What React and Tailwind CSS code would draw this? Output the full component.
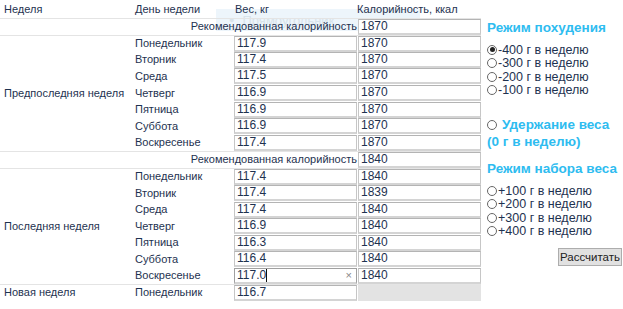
import React from 'react';

const week1 = [
  ['Понедельник', '117.9', '1870'],
  ['Вторник', '117.4', '1870'],
  ['Среда', '117.5', '1870'],
  ['Четверг', '116.9', '1870'],
  ['Пятница', '116.9', '1870'],
  ['Суббота', '116.9', '1870'],
  ['Воскресенье', '117.4', '1870'],
];

const week2 = [
  ['Понедельник', '117.4', '1840'],
  ['Вторник', '117.4', '1839'],
  ['Среда', '117.4', '1840'],
  ['Четверг', '116.9', '1840'],
  ['Пятница', '116.3', '1840'],
  ['Суббота', '116.4', '1840'],
  ['Воскресенье', '117.0', '1840', true],
];

const Box = ({ value, focused, disabled }) => (
  <div
    className={`h-[16px] flex items-center pl-[2px] border border-b-2 text-[12px] ${
      disabled
        ? 'bg-[#e3e3e3] border-[#e3e3e3]'
        : focused
        ? 'bg-white border-[#a0a0a0] border-b-[#d4d4d4]'
        : 'bg-white border-[#c6c6c6] border-t-[#b4b4b4] border-b-[#d4d4d4]'
    }`}
  >
    <span>{value}</span>
    {focused && <span className="w-[1px] h-[13px] bg-[#111]" />}
    {focused && <span className="ml-auto mr-[4px] text-[11px] text-[#888]">×</span>}
  </div>
);

const Radio = ({ checked }) => (
  <span className="inline-flex w-[10px] h-[10px] rounded-full border border-[#666] bg-white items-center justify-center mr-[1px] shrink-0">
    {checked && <span className="w-[5px] h-[5px] rounded-full bg-[#222]" />}
  </span>
);

const Option = ({ label, checked }) => (
  <div className="flex items-center h-[13.5px]">
    <Radio checked={checked} />
    <span>{label}</span>
  </div>
);

function WeekRows({ name, days }) {
  return days.map(([day, w, c, focused], i) => (
    <tr key={day} className={`h-[16.6px] ${i === 0 ? 'border-t border-[#e4e4e4]' : ''}`}>
      {i === 0 && (
        <td rowSpan={7} className="p-0 pl-[4px] align-middle whitespace-nowrap">
          {name}
        </td>
      )}
      <td className="p-0 pl-[4px]">{day}</td>
      <td className="p-0">
        <Box value={w} focused={focused} />
      </td>
      <td className="p-0 pl-[1px]">
        <Box value={c} />
      </td>
    </tr>
  ));
}

function RecRow({ value }) {
  return (
    <tr className="h-[16.6px] border-t border-[#e4e4e4]">
      <td colSpan={3} className="text-right p-0 whitespace-nowrap">
        Рекомендованная калорийность
      </td>
      <td className="p-0 pl-[1px]">
        <Box value={value} />
      </td>
    </tr>
  );
}

export default function App() {
  return (
    <div className="w-[623px] h-[309px] bg-white text-[#1e3250] text-[11px] leading-[13px] flex" style={{ fontFamily: '"Liberation Sans", Arial, sans-serif' }}>
      <div className="relative w-[481px] shrink-0">
        {/* ghost tooltip left over in the capture */}
        <div className="absolute left-[216px] top-[9px] w-[204px] h-[22px] bg-[#edf5fb] flex items-center pl-[13px] text-[#d8e3ea] text-[13px]">
          <span className="text-[9px] mr-[8px]">●</span>Прямоугольник
        </div>
        <table className="relative border-collapse w-[481px] table-fixed">
          <colgroup>
            <col className="w-[131px]" />
            <col className="w-[103px]" />
            <col className="w-[123px]" />
            <col className="w-[124px]" />
          </colgroup>
          <thead>
            <tr className="h-[18px]">
              <th className="p-0 font-normal text-left pl-[4px] pt-[1px]">Неделя</th>
              <th className="p-0 font-normal text-left pl-[4px] pt-[1px]">День недели</th>
              <th className="p-0 font-normal text-left pl-[1px] pt-[1px]">Вес, кг</th>
              <th className="p-0 font-normal text-left pl-[0px] pt-[1px]">Калорийность, ккал</th>
            </tr>
          </thead>
          <tbody>
            <RecRow value="1870" />
            <WeekRows name="Предпоследняя неделя" days={week1} />
            <RecRow value="1840" />
            <WeekRows name="Последняя неделя" days={week2} />
            <tr className="h-[16.6px] border-t border-[#e4e4e4]">
              <td className="p-0 pl-[4px]">Новая неделя</td>
              <td className="p-0 pl-[4px]">Понедельник</td>
              <td className="p-0">
                <Box value="116.7" />
              </td>
              <td className="p-0 pl-[1px]">
                <Box disabled />
              </td>
            </tr>
          </tbody>
        </table>
      </div>

      <div className="flex-1 pl-[6px] pt-[19px] pr-[1px] text-[12.5px] leading-[14px]">
        <div className="text-[#2ebcf0] font-bold text-[13.5px] leading-[17px] whitespace-nowrap">Режим похудения</div>
        <div className="mt-[7px]">
          <Option label="-400 г в неделю" checked />
          <Option label="-300 г в неделю" />
          <Option label="-200 г в неделю" />
          <Option label="-100 г в неделю" />
        </div>
        <div className="mt-[19px] text-[#2ebcf0] font-bold text-[13.5px] leading-[17px] whitespace-nowrap">
          <div className="flex items-center">
            <Radio />
            <span className="ml-[4px]">Удержание веса</span>
          </div>
          <div>(0 г в неделю)</div>
        </div>
        <div className="mt-[10px] text-[#2ebcf0] font-bold text-[13.5px] leading-[17px] whitespace-nowrap">Режим набора веса</div>
        <div className="mt-[7px]">
          <Option label="+100 г в неделю" />
          <Option label="+200 г в неделю" />
          <Option label="+300 г в неделю" />
          <Option label="+400 г в неделю" />
        </div>
        <div className="flex justify-end mt-[10px]">
          <button className="h-[18px] px-[1px] bg-[#e1e1e1] border border-[#adadad] text-[11.5px] leading-[14px] text-[#222]">Рассчитать</button>
        </div>
      </div>
    </div>
  );
}
